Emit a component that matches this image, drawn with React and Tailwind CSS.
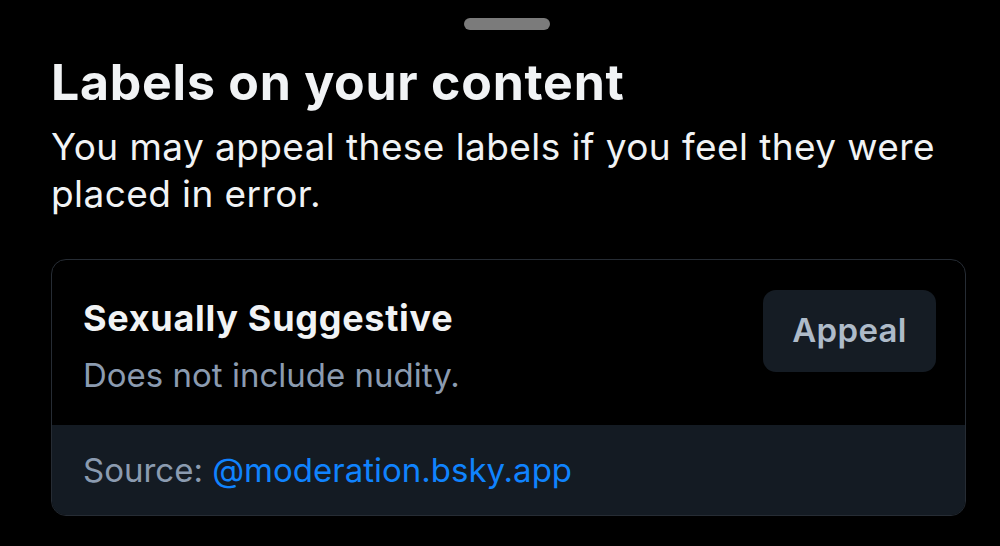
export default function App() {
  return (
    <div
      className="w-[1000px] h-[546px] bg-black overflow-hidden"
      style={{ fontFamily: "Inter, 'Noto Sans', sans-serif" }}
    >
      <div className="flex justify-center pt-[18px] pl-[14px]">
        <div className="w-[86px] h-[12px] rounded-full bg-[#7b7b7b]" />
      </div>

      <div className="px-[51px]">
        <h1 className="mt-[24px] text-[50px] leading-[56px] font-bold text-[#f1f3f5] tracking-[0.75px]">
          Labels on your content
        </h1>
        <p className="mt-[13px] text-[37px] leading-[47px] text-[#f1f3f5] tracking-[0.42px]">
          You may appeal these labels if you feel they were placed in error.
        </p>

        <div className="mt-[42px] w-[915px] rounded-[15px] border border-[#262c34] overflow-hidden">
          <div className="flex items-start justify-between pl-[31px] pr-[29px] pt-[30px] h-[165px]">
            <div className="mt-[6px]">
              <div className="text-[36px] leading-[44px] font-bold text-[#f1f3f5] tracking-[0.7px]">
                Sexually Suggestive
              </div>
              <div className="text-[33px] leading-[40px] text-[#8b9bb0] mt-[15px]">
                Does not include nudity.
              </div>
            </div>
            <button className="w-[173px] h-[82px] rounded-[13px] bg-[#151c24] text-[33px] font-semibold text-[#aebbc9] tracking-[0.3px]">
              Appeal
            </button>
          </div>
          <div className="h-[90px] bg-[#141b23] pl-[31px] flex items-center text-[33px] leading-[40px] text-[#8b9bb0]">
            Source:&nbsp;<span className="text-[#1083fe]">@moderation.bsky.app</span>
          </div>
        </div>
      </div>
    </div>
  );
}
